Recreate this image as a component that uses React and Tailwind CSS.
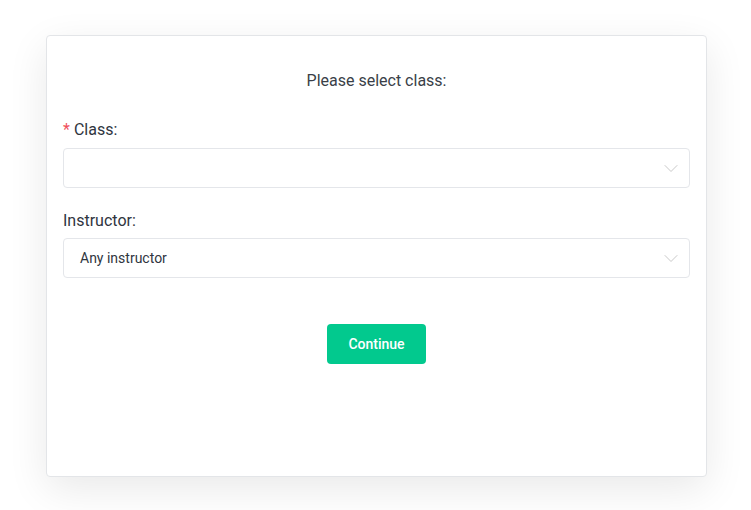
import React from 'react';

function Chevron() {
  return (
    <svg width="14" height="14" viewBox="0 0 14 14" fill="none" className="text-[#c8c8c8]">
      <path d="M1 4.5l6 6 6-6" stroke="currentColor" strokeWidth="1" strokeLinecap="round" strokeLinejoin="round" />
    </svg>
  );
}

function Select({ value }) {
  return (
    <div className="flex h-10 w-full items-center justify-between rounded-[4px] border border-[#e4e6ea] bg-white pl-4 pr-[11px] text-sm text-[#2f3540]">
      <span>{value}</span>
      <Chevron />
    </div>
  );
}

export default function App() {
  return (
    <div className="min-h-screen bg-white px-[46px] pt-[35px] font-['Roboto',sans-serif]">
      <div className="h-[442px] w-[661px] rounded-[4px] border border-[#e3e5e8] bg-white px-4 pt-[33px] shadow-[0_12px_40px_rgba(0,0,0,0.09)]">
        <div className="text-center text-[16px] leading-6 text-[#3a3f48]">Please select class:</div>

        <div className="mt-[26px] text-[16px] leading-[22px] text-[#2f3540]">
          <span className="mr-[4px] text-[#f0505c]">*</span>Class:
        </div>
        <div className="mt-[7px]">
          <Select value="" />
        </div>

        <div className="mt-[22px] text-[16px] leading-[22px] text-[#2f3540]">Instructor:</div>
        <div className="mt-[6px]">
          <Select value="Any instructor" />
        </div>

        <div className="mt-[46px] flex justify-center">
          <button className="h-10 w-[99px] rounded-[4px] bg-[#02c98e] text-sm font-medium text-white">Continue</button>
        </div>
      </div>
    </div>
  );
}
